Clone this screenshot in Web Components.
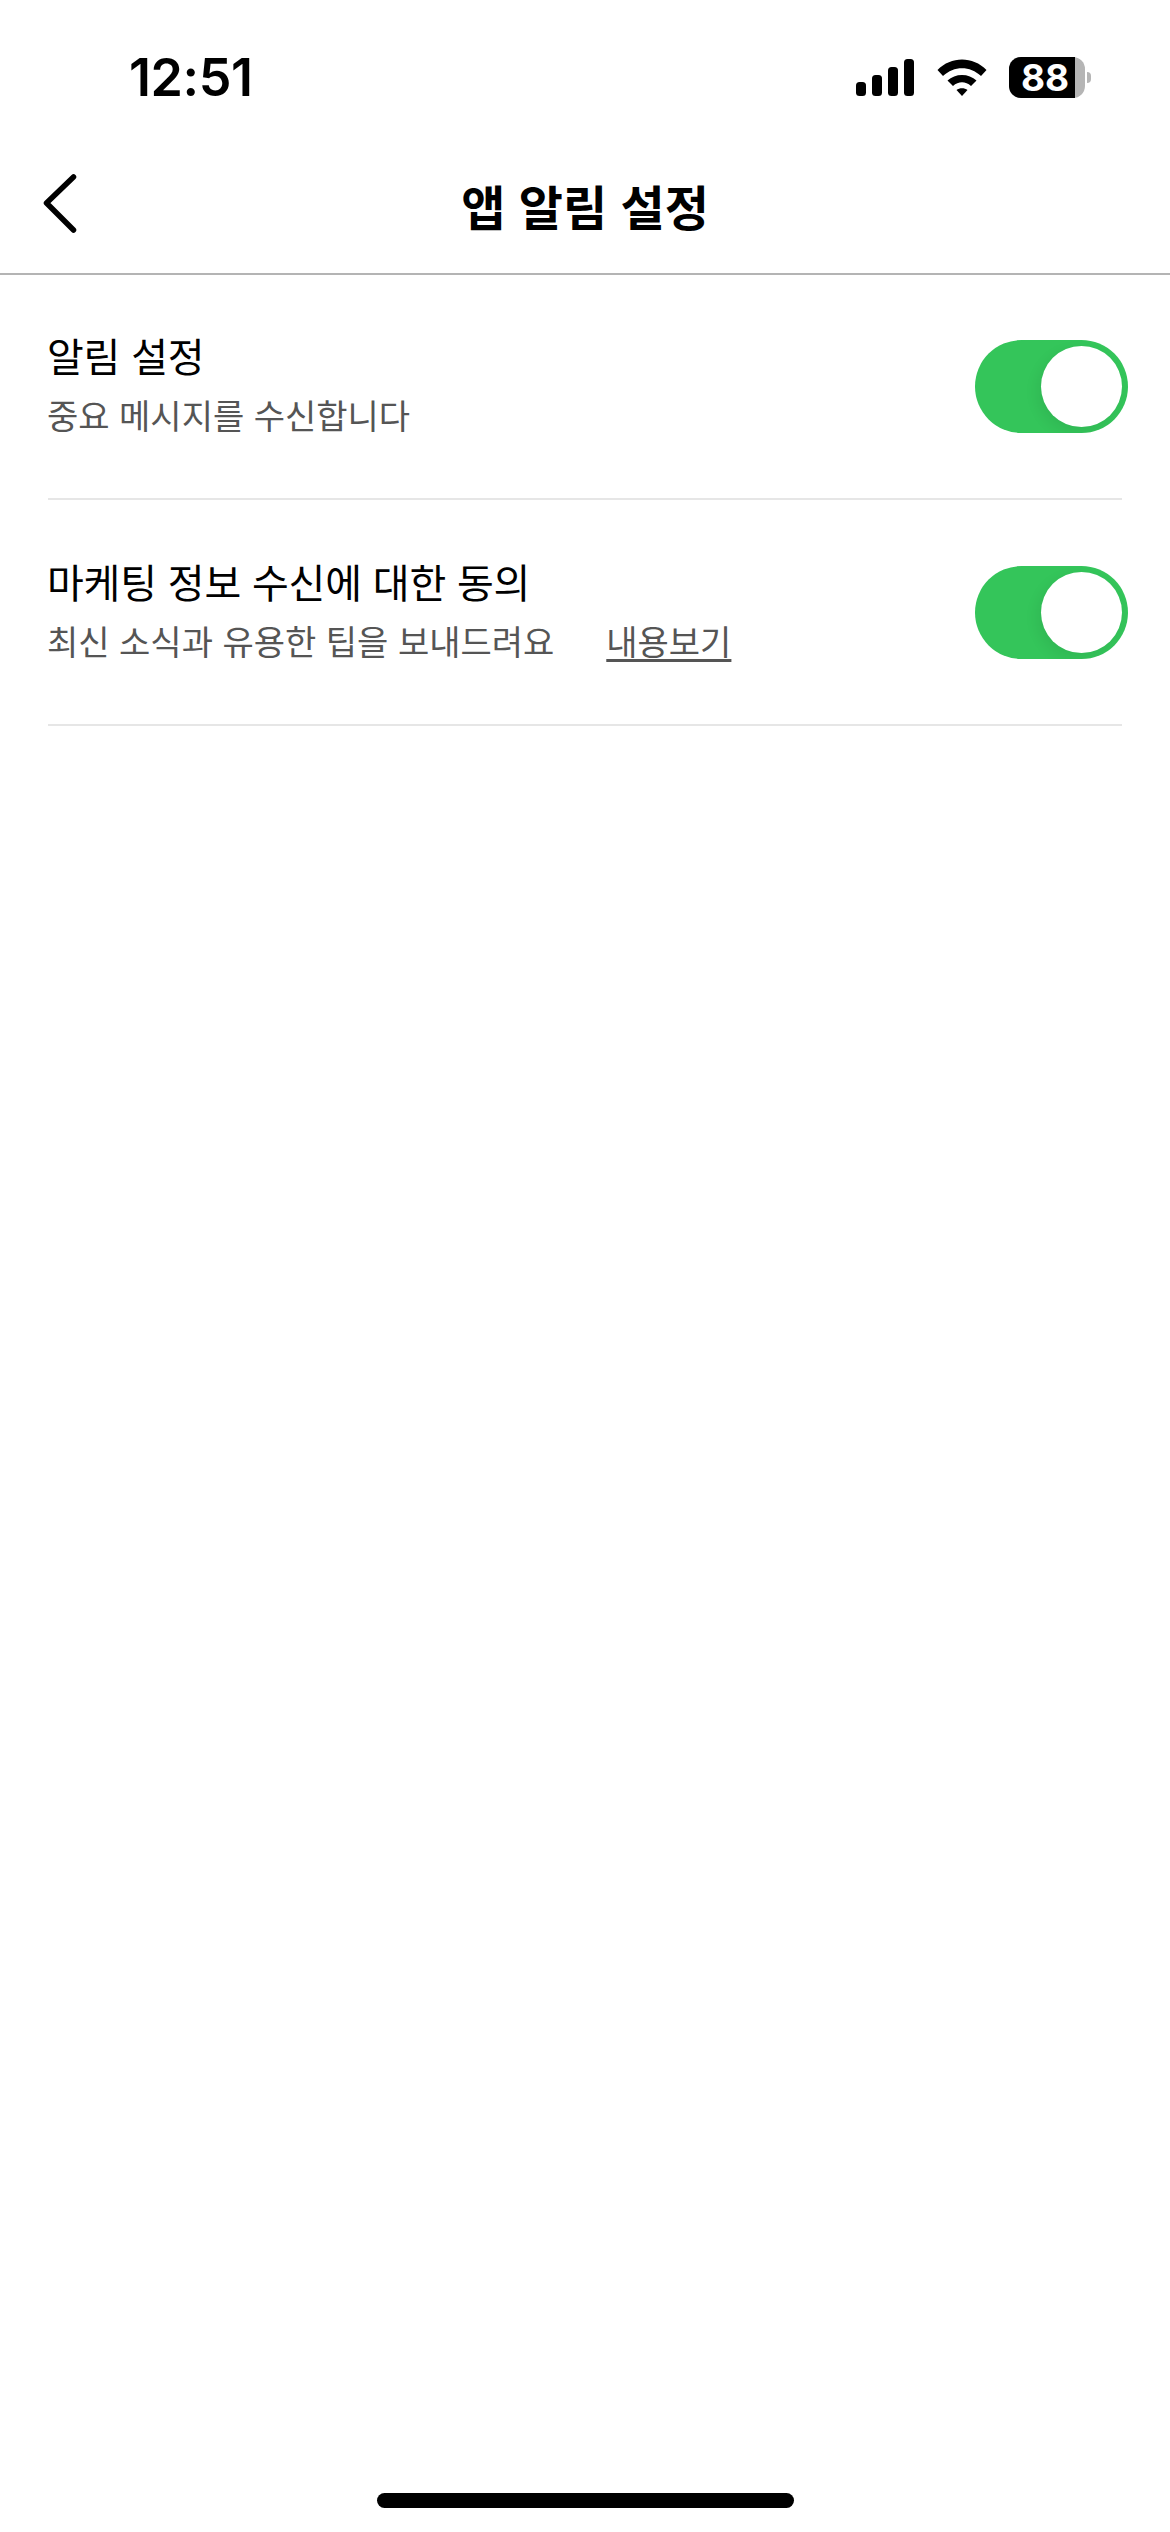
<!DOCTYPE html>
<html lang="ko"><head><meta charset="utf-8">
<style>
html,body{margin:0;padding:0;background:#fff}
body{width:1170px;height:2532px;font-family:"Noto Sans CJK KR","Noto Sans",sans-serif;display:flex;flex-direction:column}
settings-list{flex:1}
</style></head><body>
<status-bar></status-bar>
<nav-header>앱 알림 설정</nav-header>
<settings-list>
  <setting-row><span slot="title">알림 설정</span><span slot="sub">중요 메시지를 수신합니다</span></setting-row>
  <setting-row><span slot="title">마케팅 정보 수신에 대한 동의</span><span slot="sub">최신 소식과 유용한 팁을 보내드려요</span><span slot="link">내용보기</span></setting-row>
</settings-list>
<home-indicator></home-indicator>
<script>
function def(name,html){customElements.define(name,class extends HTMLElement{constructor(){super();this.attachShadow({mode:'open'}).innerHTML=html}})}
def('battery-icon',`<style>
:host{display:flex;align-items:center;width:82px;height:41px;margin-top:57px}
.body{width:76px;height:41px;border-radius:12px;display:flex;background:#b5b5b5}
.fill{width:66px;border-radius:12px 0 0 12px;background:#000;color:#fff;font:700 37px/41px Inter,sans-serif;box-sizing:border-box;padding-left:12px;white-space:nowrap}
.nub{width:4px;height:11px;margin-left:2px;background:#b5b5b5;border-radius:0 6px 6px 0}
</style><div class="body"><div class="fill">88</div></div><div class="nub"></div>`);
def('status-bar',`<style>
:host{display:flex;height:150px;box-sizing:border-box;padding:0 79px 0 129px;align-items:flex-start;color:#000}
.t{font:600 52px/1 Inter,sans-serif;margin-top:52px;margin-right:auto;letter-spacing:-.4px}
svg{display:block;margin-top:59px}
.wifi{margin:59px 22px 0 23px}
</style><span class="t">12:51</span>
<svg width="58" height="37" viewBox="0 0 58 37" fill="#000"><rect x="0" y="23" width="10" height="14" rx="3.500"/><rect x="16" y="16" width="10" height="21" rx="3.500"/><rect x="32" y="8" width="10" height="29" rx="3.500"/><rect x="48" y="0" width="10" height="37" rx="3.500"/></svg>
<svg class="wifi" width="50" height="37" viewBox="0 0 50 37" fill="#000"><path d="M0.500 11C14-3 36-3 49.500 11L44 17C33 6.500 17 6.500 6 17Z"/><path d="M10.500 21.500C18 14 32 14 39.500 21.500L34 27C28.500 22 21.500 22 16 27Z"/><path d="M19.500 31C22.500 28.500 27.500 28.500 30.500 31L25 37Z"/></svg>
<battery-icon></battery-icon>`);
def('nav-header',`<style>
:host{display:flex;height:123px;box-sizing:content-box;padding-bottom:0;border-bottom:2px solid #b4b4b4;position:relative;align-items:center;justify-content:center;font:700 48px/1 "Noto Sans CJK KR",sans-serif;color:#000}
span{margin-bottom:14px}
svg{position:absolute;left:40px;top:20px}
</style><svg width="42" height="66" viewBox="0 0 42 66"><path d="M33.500 7 6.500 33 33.500 60" fill="none" stroke="#000" stroke-width="5.500" stroke-linecap="round" stroke-linejoin="round"/></svg><span><slot></slot></span>`);
def('settings-list',`<style>:host{display:block;padding:0 48px;margin-top:-1px}</style><slot></slot>`);
def('setting-row',`<style>
:host{display:flex;height:226px;box-sizing:border-box;border-bottom:2px solid #e6e6e6;align-items:center;justify-content:space-between;font-family:"Noto Sans CJK KR",sans-serif}
.txt{display:flex;flex-direction:column;gap:11px;padding-bottom:6px}
.title{font-size:40px;line-height:52px;color:#000;margin-left:-1px;letter-spacing:-.2px}
.sub{font-size:34px;line-height:46px;color:#555;display:flex;gap:52px;margin-left:-1px}
::slotted([slot=link]){text-decoration:underline;text-underline-offset:4px}
</style><div class="txt"><div class="title"><slot name="title"></slot></div><div class="sub"><slot name="sub"></slot><slot name="link"></slot></div></div><toggle-switch></toggle-switch>`);
def('toggle-switch',`<style>
:host{display:block;width:153px;height:93px;border-radius:47px;background:#34c55a;position:relative;margin-right:-6px;overflow:hidden}
i{position:absolute;left:66px;top:6px;width:81px;height:81px;border-radius:50%;background:#fff;box-shadow:-4px 5px 14px rgba(0,0,0,.07)}
</style><i></i>`);
def('home-indicator',`<style>:host{display:flex;justify-content:center;height:39px;box-sizing:border-box}
b{display:block;width:417px;height:15px;border-radius:8px;background:#000}</style><b></b>`);
</script>
</body></html>
